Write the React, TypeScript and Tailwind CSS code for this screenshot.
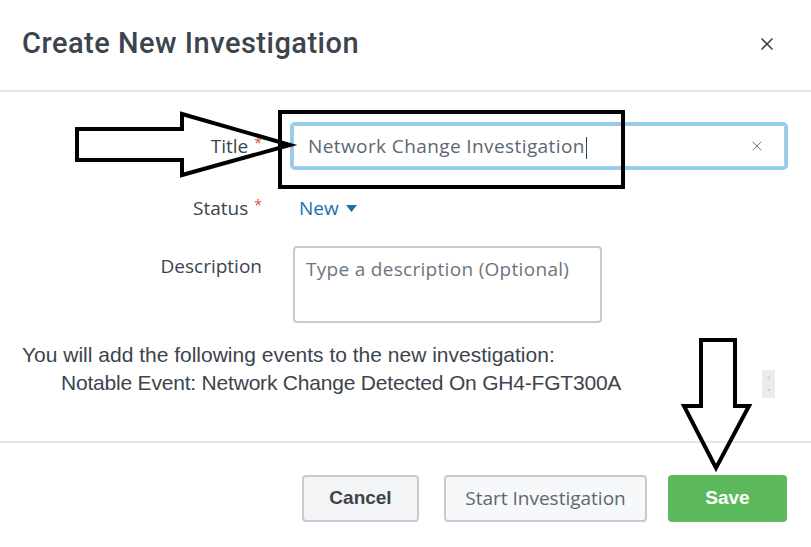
import { X } from "lucide-react";

const font = { fontFamily: '"Liberation Sans", Arial, sans-serif' };
const open = { fontFamily: '"Open Sans", "Liberation Sans", sans-serif' };

function Label({ text, required }: { text: string; required?: boolean }) {
  return (
    <div className="w-[262px] shrink-0 text-right text-[19px] text-[#3c444d]" style={open}>
      {text}
      {required && <span className="ml-[6px] text-[14px] align-top text-[#d6563c]">*</span>}
    </div>
  );
}

export default function App() {
  return (
    <div className="relative h-[547px] w-[811px] overflow-hidden bg-white" style={font}>
      {/* header */}
      <div className="flex h-[92px] items-center justify-between border-b-2 border-[#e1e6ea] pb-[2px] pl-[22px] pr-[34px]">
        <h1
          className="text-[29px] font-medium tracking-[0.5px] text-[#3c444d]"
          style={{ fontFamily: 'Roboto, "Liberation Sans", sans-serif' }}
        >
          Create New Investigation
        </h1>
        <X size={20} strokeWidth={2} className="text-[#3c444d]" />
      </div>

      {/* body */}
      <div className="flex h-[351px] flex-col border-b-2 border-[#e1e6ea] pt-[30px]">
        <div className="flex items-center gap-[28px]">
          <Label text="Title" required />
          <div className="flex h-[48px] w-[498px] items-center justify-between rounded-[5px] border-[3px] border-[#8fcdf3] pl-[15px] pr-[20px] shadow-[inset_0_0_0_1px_#b9c7d3]">
            <span className="text-[19px] tracking-[0.4px] text-[#5c6773]" style={open}>
              Network Change Investigation<span className="ml-[1px] inline-block h-[22px] w-[1px] align-middle bg-[#3c444d]" />
            </span>
            <X size={16} strokeWidth={1.5} className="text-[#6b7580]" />
          </div>
        </div>

        <div className="mt-[24px] flex items-center gap-[37px]">
          <Label text="Status" required />
          <div className="flex items-center gap-[7px] text-[19px] text-[#1a72a8]" style={open}>
            New
            <svg width="11" height="7" viewBox="0 0 11 7">
              <path d="M0 0h11L5.5 7z" fill="#1a72a8" />
            </svg>
          </div>
        </div>

        <div className="mt-[23px] flex items-start gap-[31px]">
          <div className="pt-[6px]">
            <Label text="Description" />
          </div>
          <div
            className="h-[77px] w-[309px] rounded-[4px] border-2 border-[#c3cbd4] px-[11px] pt-[7px] text-[19px] tracking-[0.3px] text-[#6b7580]"
            style={open}
          >
            Type a description (Optional)
          </div>
        </div>

        <div className="relative mt-[18px] pl-[22px] text-[21px] leading-[28px] text-[#3c444d]">
          <p>You will add the following events to the new investigation:</p>
          <p className="pl-[39px] tracking-[-0.2px]">Notable Event: Network Change Detected On GH4-FGT300A</p>
          <div className="absolute right-[36px] top-[29px] flex h-[28px] w-[13px] flex-col items-center justify-between bg-[#ebebeb] py-[5px] text-[6px] leading-none text-[#aaa]">
            <span>˄</span>
            <span>˅</span>
          </div>
        </div>
      </div>

      {/* footer */}
      <div className="flex justify-end gap-[25px] pr-[24px] pt-[32px]">
        <button className="h-[47px] w-[117px] rounded-[4px] border-2 border-[#c3cbd4] bg-[#f2f4f5] text-[19px] font-bold text-[#3c444d]">
          Cancel
        </button>
        <button
          className="h-[47px] w-[203px] rounded-[4px] border-2 border-[#c3cbd4] bg-[#f7f8fa] text-[19px] text-[#5c6773]"
          style={open}
        >
          Start Investigation
        </button>
        <button className="-ml-[4px] h-[47px] w-[119px] rounded-[4px] bg-[#5cba5c] text-[19px] font-bold text-white">
          Save
        </button>
      </div>

      {/* annotations */}
      <svg className="pointer-events-none absolute left-0 top-0" width="811" height="547" viewBox="0 0 811 547">
        <rect x="280" y="112" width="343" height="75" fill="none" stroke="#000" strokeWidth="4" />
        <path
          d="M77 129 L182 129 L182 114 L290 145 L182 175 L182 160 L77 160 Z"
          fill="none"
          stroke="#000"
          strokeWidth="4"
          strokeLinejoin="miter"
        />
        <path
          d="M701 340 L735 340 L735 406 L749 406 L716 468 L684 406 L701 406 Z"
          fill="none"
          stroke="#000"
          strokeWidth="4"
          strokeLinejoin="miter"
        />
      </svg>
    </div>
  );
}
